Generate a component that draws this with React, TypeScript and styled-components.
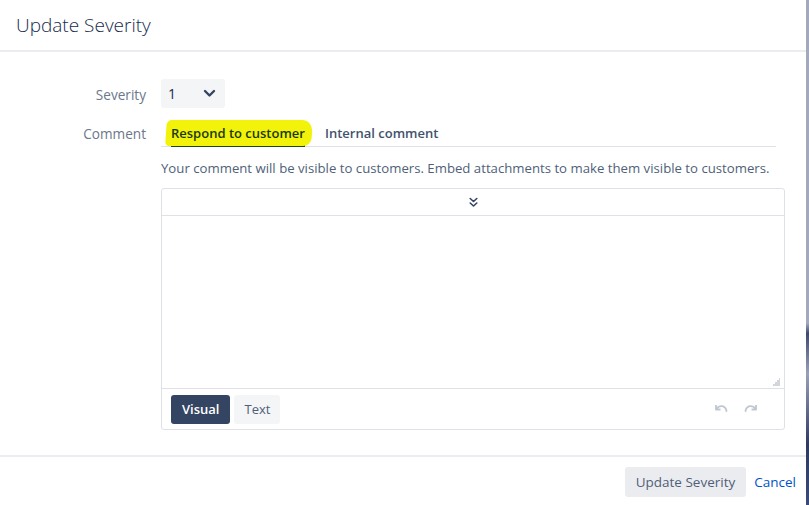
import React, { useState } from "react";
import styled, { createGlobalStyle } from "styled-components";

const GlobalStyle = createGlobalStyle`
  html, body { margin: 0; padding: 0; background: #fff; }
  body { font-family: "Open Sans", "Noto Sans", "Liberation Sans", sans-serif; color: #172b4d; }
  * { box-sizing: border-box; }
`;

const Page = styled.div`
  display: flex;
  width: 809px;
  height: 505px;
  overflow: hidden;
`;

const Dialog = styled.div`
  width: 806px;
  height: 505px;
  display: flex;
  flex-direction: column;
  background: #fff;
`;

const Edge = styled.div`
  width: 3px;
  background: linear-gradient(#a4a8bb 0%, #a4a8bb 64%, #3f4a6b 66%, #9aa0b5 74%, #2f3a5e 88%, #3b4a7a 100%);
`;

const Header = styled.div`
  height: 52px;
  padding: 0 16px;
  display: flex;
  align-items: center;
  border-bottom: 2px solid #ebecf0;
`;

const Title = styled.h2`
  margin: 0;
  font-size: 19px;
  font-weight: 300;
  color: #172b4d;
`;

const Body = styled.div`
  flex: 1;
  padding: 27px 20px 0 0;
  display: flex;
  flex-direction: column;
  gap: 10px;
  border-bottom: 2px solid #ebecf0;
`;

const Row = styled.div`
  display: grid;
  grid-template-columns: 146px 624px;
  column-gap: 15px;
  align-items: start;
`;

const Label = styled.label<{ $top: number }>`
  text-align: right;
  font-size: 13.6px;
  color: #6b778c;
  padding-top: ${(p) => p.$top}px;
`;

const Select = styled.div`
  width: 64px;
  height: 29px;
  background: #f4f5f7;
  border-radius: 3px;
  display: flex;
  align-items: center;
  justify-content: space-between;
  padding: 0 9px 0 7px;
  font-size: 14px;
  color: #172b4d;
`;

const Field = styled.div`
  display: flex;
  flex-direction: column;
`;

const Tabs = styled.div`
  display: flex;
  gap: 20px;
  width: 615px;
  padding-left: 10px;
  border-bottom: 1px solid #dfe1e6;
`;

const Tab = styled.button<{ $active?: boolean }>`
  position: relative;
  border: 0;
  background: none;
  padding: 6px 0 3px;
  font-family: inherit;
  font-size: 13px;
  font-weight: 600;
  color: ${(p) => (p.$active ? "#1b3a0c" : "#42526e")};
  border-bottom: 2px solid ${(p) => (p.$active ? "#1f4a10" : "transparent")};
  margin-bottom: -1px;
  cursor: pointer;
`;

const TabText = styled.span`
  position: relative;
  z-index: 1;
`;

const Marker = styled.span`
  position: absolute;
  left: -5px;
  right: -7px;
  top: 2px;
  bottom: -1px;
  background: #f2f20a;
  border-radius: 5px 11px 8px 4px;
  transform: skewX(-4deg);
`;

const Help = styled.p`
  margin: 12px 0 11px;
  font-size: 13.2px;
  color: #505f79;
  white-space: nowrap;
`;

const Editor = styled.div`
  width: 624px;
  border: 1px solid #dfe1e6;
  border-radius: 3px;
  display: flex;
  flex-direction: column;
`;

const Toolbar = styled.div`
  height: 27px;
  border-bottom: 1px solid #dfe1e6;
  display: flex;
  align-items: center;
  justify-content: center;
  color: #344563;
`;

const Content = styled.div`
  position: relative;
  height: 173px;
  border-bottom: 1px solid #dfe1e6;
`;

const Grip = styled.svg`
  position: absolute;
  right: 3px;
  bottom: 2px;
`;

const EditorFooter = styled.div`
  height: 40px;
  display: flex;
  align-items: center;
  padding: 0 9px;
  gap: 4px;
`;

const ModeButton = styled.button<{ $active?: boolean }>`
  height: 29px;
  padding: 0 ${(p) => (p.$active ? 11 : 10)}px;
  border: 0;
  border-radius: 3px;
  font-family: inherit;
  font-size: 13px;
  font-weight: ${(p) => (p.$active ? 600 : 400)};
  background: ${(p) => (p.$active ? "#344563" : "#f4f5f7")};
  color: ${(p) => (p.$active ? "#fff" : "#505f79")};
  cursor: pointer;
`;

const History = styled.div`
  margin-left: auto;
  margin-right: 16px;
  display: flex;
  gap: 14px;
  color: #c1c7d0;
`;

const Footer = styled.div`
  height: 48px;
  display: flex;
  align-items: center;
  justify-content: flex-end;
  padding: 2px 6px 0 0;
  gap: 4px;
`;

const PrimaryButton = styled.button`
  height: 30px;
  padding: 0 11px;
  border: 0;
  border-radius: 3px;
  background: #ebecf0;
  color: #505f79;
  font-family: inherit;
  font-size: 13.5px;
  cursor: pointer;
`;

const LinkButton = styled.button`
  border: 0;
  background: none;
  padding: 0 4px;
  color: #0052cc;
  font-family: inherit;
  font-size: 13.5px;
  cursor: pointer;
`;

const Chevron = () => (
  <svg width="13" height="9" viewBox="0 0 13 9">
    <path d="M2 2l4.5 4.5L11 2" fill="none" stroke="#344563" strokeWidth="2.4" strokeLinecap="round" strokeLinejoin="round" />
  </svg>
);

const DoubleChevron = () => (
  <svg width="9" height="11" viewBox="0 0 9 11">
    <path d="M1.2 1.5l3.3 3 3.3-3M1.2 6l3.3 3 3.3-3" fill="none" stroke="#344563" strokeWidth="1.6" strokeLinecap="round" strokeLinejoin="round" />
  </svg>
);

const UndoIcon = ({ flip }: { flip?: boolean }) => (
  <svg width="16" height="12" viewBox="0 0 16 12" style={flip ? { transform: "scaleX(-1)" } : undefined}>
    <path d="M3 2v4.5h4.5" fill="none" stroke="currentColor" strokeWidth="1.8" strokeLinejoin="round" />
    <path d="M3.5 6C5 3.8 7 3 9 3.2c2.5.3 4 2.2 4.5 4.8" fill="none" stroke="currentColor" strokeWidth="1.8" strokeLinecap="round" />
  </svg>
);

export default function App() {
  const [tab, setTab] = useState("customer");
  const [mode, setMode] = useState("visual");

  return (
    <>
      <GlobalStyle />
      <Page>
        <Dialog>
          <Header>
            <Title>Update Severity</Title>
          </Header>
          <Body>
            <Row>
              <Label $top={6}>Severity</Label>
              <Select>
                <span>1</span>
                <Chevron />
              </Select>
            </Row>
            <Row>
              <Label $top={6}>Comment</Label>
              <Field>
                <Tabs>
                  <Tab $active={tab === "customer"} onClick={() => setTab("customer")}>
                    {tab === "customer" && <Marker />}
                    <TabText>Respond to customer</TabText>
                  </Tab>
                  <Tab $active={tab === "internal"} onClick={() => setTab("internal")}>
                    <TabText>Internal comment</TabText>
                  </Tab>
                </Tabs>
                <Help>Your comment will be visible to customers. Embed attachments to make them visible to customers.</Help>
                <Editor>
                  <Toolbar>
                    <DoubleChevron />
                  </Toolbar>
                  <Content>
                    <Grip width="9" height="8" viewBox="0 0 9 8">
                      <path d="M7 1h1M5 3h3M3 5h5M1 7h7" stroke="#a5adba" strokeWidth="1" />
                    </Grip>
                  </Content>
                  <EditorFooter>
                    <ModeButton $active={mode === "visual"} onClick={() => setMode("visual")}>Visual</ModeButton>
                    <ModeButton $active={mode === "text"} onClick={() => setMode("text")}>Text</ModeButton>
                    <History>
                      <UndoIcon />
                      <UndoIcon flip />
                    </History>
                  </EditorFooter>
                </Editor>
              </Field>
            </Row>
          </Body>
          <Footer>
            <PrimaryButton>Update Severity</PrimaryButton>
            <LinkButton>Cancel</LinkButton>
          </Footer>
        </Dialog>
        <Edge />
      </Page>
    </>
  );
}
